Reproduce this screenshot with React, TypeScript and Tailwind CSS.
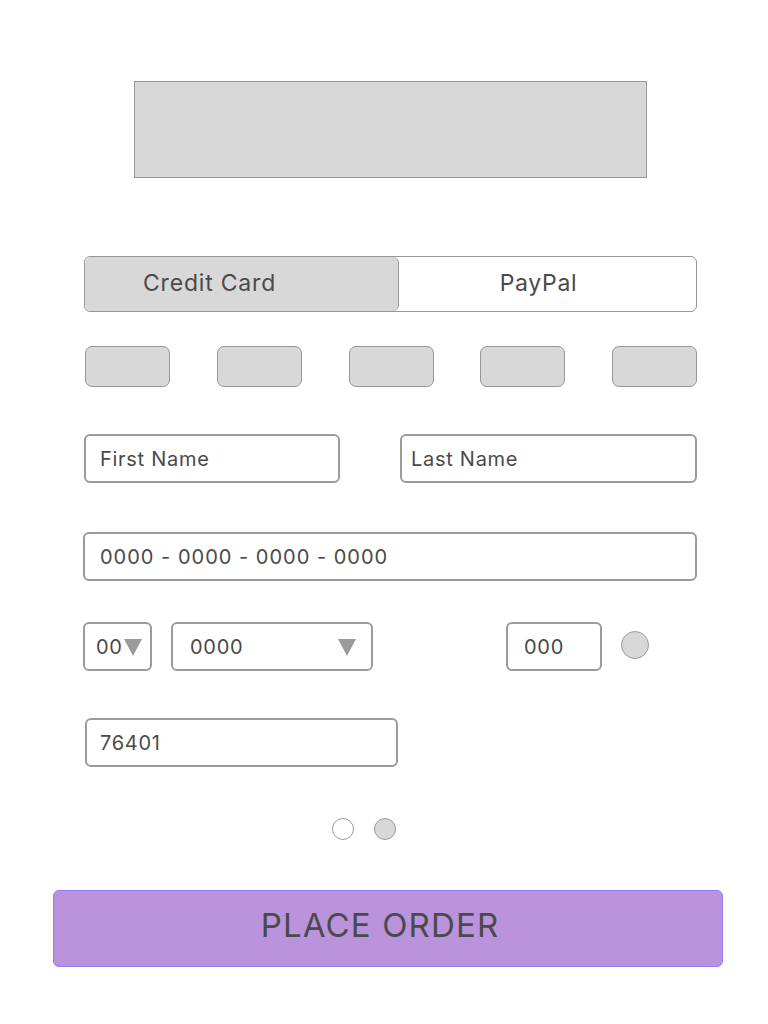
export default function App() {
  const font = { fontFamily: 'Inter, "Open Sans", sans-serif' };
  const cards = [0, 1, 2, 3, 4];

  const Arrow = () => (
    <svg width="18" height="18" viewBox="0 0 18 18" className="shrink-0">
      <path d="M0 1 H18 L9 18 Z" fill="#9b9b9b" />
    </svg>
  );

  return (
    <div className="w-[768px] h-[1024px] bg-white text-[#4a4a4a] tracking-[0.045em] pt-[81px]" style={font}>
      {/* Banner placeholder */}
      <div className="ml-[134px] w-[513px] h-[97px] bg-[#d8d8d8] border border-[#979797]" />

      {/* Payment method toggle */}
      <div className="ml-[84px] mt-[78px] w-[613px] h-[56px] flex border border-[#979797] rounded-[6px] overflow-hidden">
        <div className="w-[314px] h-full bg-[#d8d8d8] border-r border-[#979797] rounded-[6px] flex items-center pl-[58px] pb-[2px] text-[23px] tracking-[0.035em]">
          Credit Card
        </div>
        <div className="flex-1 flex items-center justify-center pr-[18px] pb-[2px] text-[23px] tracking-[0.03em]">PayPal</div>
      </div>

      {/* Card types */}
      <div className="ml-[85px] mt-[34px] w-[612px] flex justify-between">
        {cards.map((c) => (
          <div key={c} className="w-[85px] h-[41px] bg-[#d8d8d8] border border-[#979797] rounded-[7px]" />
        ))}
      </div>

      {/* Names */}
      <div className="ml-[84px] mt-[47px] w-[613px] flex justify-between">
        <div className="w-[256px] h-[49px] border-2 border-[#9b9b9b] rounded-[6px] flex items-center pl-[14px] text-[20px]">
          First Name
        </div>
        <div className="w-[297px] h-[49px] border-2 border-[#9b9b9b] rounded-[6px] flex items-center pl-[9px] text-[20px]">
          Last Name
        </div>
      </div>

      {/* Card number */}
      <div className="ml-[83px] mt-[49px] w-[614px] h-[49px] border-2 border-[#9b9b9b] rounded-[6px] flex items-center pl-[15px] text-[20px] tracking-[0.05em]">
        0000 - 0000 - 0000 - 0000
      </div>

      {/* Expiry / CVV */}
      <div className="ml-[83px] mt-[41px] flex items-center">
        <div className="w-[69px] h-[49px] border-2 border-[#9b9b9b] rounded-[6px] flex items-center pl-[11px] pr-[4px] gap-[1px] text-[20px]">
          <span>00</span>
          <Arrow />
        </div>
        <div className="ml-[19px] w-[202px] h-[49px] border-2 border-[#9b9b9b] rounded-[6px] flex items-center justify-between pl-[17px] pr-[15px] text-[20px]">
          <span>0000</span>
          <Arrow />
        </div>
        <div className="ml-[133px] w-[96px] h-[49px] border-2 border-[#9b9b9b] rounded-[6px] flex items-center pl-[16px] text-[20px]">
          000
        </div>
        <div className="ml-[19px] w-[28px] h-[28px] rounded-full bg-[#d8d8d8] border border-[#9b9b9b] -mt-[3px]" />
      </div>

      {/* Zip */}
      <div className="ml-[85px] mt-[47px] w-[313px] h-[49px] border-2 border-[#9b9b9b] rounded-[6px] flex items-center pl-[13px] text-[20px]">
        76401
      </div>

      {/* Pager dots */}
      <div className="ml-[332px] mt-[51px] flex gap-[20px]">
        <div className="w-[22px] h-[22px] rounded-full bg-white border border-[#9b9b9b]" />
        <div className="w-[22px] h-[22px] rounded-full bg-[#d8d8d8] border border-[#9b9b9b]" />
      </div>

      {/* Place order */}
      <button className="ml-[53px] mt-[50px] w-[670px] h-[77px] bg-[#bb93dc] border border-[#8f7ef5] rounded-[6px] flex items-center justify-center pr-[16px] pb-[6px] text-[33px] tracking-[0.035em] text-[#4a4a4a]" style={font}>
        PLACE ORDER
      </button>
    </div>
  );
}
